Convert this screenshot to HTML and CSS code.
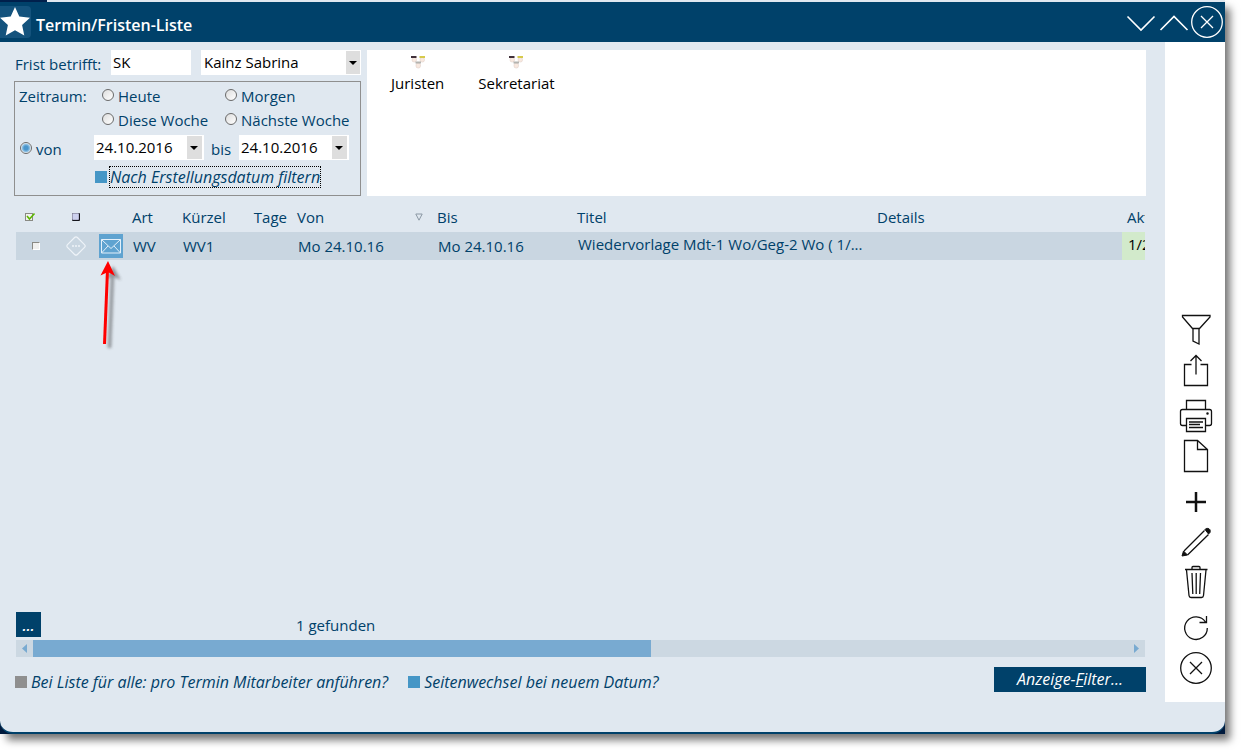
FILE: index.html
```html
<!DOCTYPE html>
<html lang="de">
<head>
<meta charset="utf-8">
<title>Termin/Fristen-Liste</title>
<link rel="stylesheet" href="styles.css">
</head>
<body>
<div class="frame">
  <div class="strip"></div>
  <div class="window">
    <header class="titlebar">
      <svg class="star" viewBox="0 0 31 32"><rect x="-4" width="35" height="32" rx="4" fill="#14537d"/><path d="M15 1l4.300 9.600 10.700 1.200-7.900 7.200 2.200 10.400-9.300-5.200-9.300 5.200 2.200-10.400L0 11.800l10.700-1.200z" fill="#fff"/></svg>
      <h1>Termin/Fristen-Liste</h1>
      <button class="winbtn" aria-label="Nach unten"><svg viewBox="0 0 32 34"><path d="M2.500 11.500L16 25 29.500 11.500"/></svg></button>
      <button class="winbtn" aria-label="Nach oben"><svg viewBox="0 0 32 34"><path d="M2.500 25L16 11.500 29.500 25"/></svg></button>
      <button class="winbtn" aria-label="Schließen"><svg viewBox="0 0 32 34"><g stroke-width="1.300"><circle cx="16" cy="17" r="15.300"/><path d="M10 11l12 12M22 11L10 23"/></g></svg></button>
    </header>

    <div class="body">
      <main class="main">
        <section class="top">
          <form class="filters">
            <div class="person">
              <label for="kz">Frist betrifft:</label>
              <input class="field code" id="kz" type="text" value="SK">
              <span class="combo name"><select class="field" aria-label="Mitarbeiter"><option>Kainz Sabrina</option></select></span>
            </div>
            <div class="period">
              <span class="caption">Zeitraum:</span>
              <label class="radio c2"><input type="radio" name="z">Heute</label>
              <label class="radio c3"><input type="radio" name="z">Morgen</label>
              <label class="radio c2"><input type="radio" name="z">Diese Woche</label>
              <label class="radio c3"><input type="radio" name="z">Nächste Woche</label>
              <div class="range">
                <label class="radio"><input type="radio" name="z" checked>von</label>
                <span class="combo date"><select class="field" aria-label="Datum von"><option>24.10.2016</option></select></span>
                <span class="until">bis</span>
                <span class="combo date"><select class="field" aria-label="Datum bis"><option>24.10.2016</option></select></span>
              </div>
              <label class="check created"><input type="checkbox" checked><span class="focus">Nach Erstellungsdatum filtern</span></label>
            </div>
          </form>
          <div class="groups">
            <a href="#" class="group"><svg class="people" viewBox="0 0 16 14"><g fill="#f8e9e0" stroke="#dccbc2" stroke-width=".5"><rect x="2" y="2.500" width="4.500" height="4.500" rx="2"/><rect x="10" y="2.500" width="4.500" height="4.500" rx="2"/><rect x="6" y="8" width="4.500" height="5" rx="2"/></g><path d="M1 1h5.500v2h-5.500z" fill="#40303a"/><path d="M9.500 1h5.500v2h-5.500z" fill="#d6ca4c"/><path d="M5.500 6.500h5.500v2h-5.500z" fill="#b4b4b0"/></svg>Juristen</a>
            <a href="#" class="group"><svg class="people" viewBox="0 0 16 14"><g fill="#f8e9e0" stroke="#dccbc2" stroke-width=".5"><rect x="2" y="2.500" width="4.500" height="4.500" rx="2"/><rect x="10" y="2.500" width="4.500" height="4.500" rx="2"/><rect x="6" y="8" width="4.500" height="5" rx="2"/></g><path d="M1 1h5.500v2h-5.500z" fill="#40303a"/><path d="M9.500 1h5.500v2h-5.500z" fill="#d6ca4c"/><path d="M5.500 6.500h5.500v2h-5.500z" fill="#b4b4b0"/></svg>Sekretariat</a>
          </div>
        </section>

        <section class="list">
          <table>
            <colgroup><col class="w-check"><col class="w-state"><col class="w-mail"><col class="w-art"><col class="w-code"><col class="w-days"><col class="w-date"><col class="w-date"><col class="w-title"><col class="w-details"><col class="w-file"></colgroup>
            <thead>
              <tr>
                <th class="pick"><svg class="mini" viewBox="0 0 12 12"><rect x="1.500" y="2.500" width="7" height="7" fill="#f2f2ee" stroke="#8a8a84"/><path d="M3 5l2.500 3L10.500 2.500" fill="none" stroke="#5cb800" stroke-width="1.600"/></svg></th>
                <th class="mid"><svg class="mini" viewBox="0 0 12 12"><rect x="2" y="2" width="8" height="8" rx="1" fill="#15151c"/><rect x="2" y="2" width="7" height="7" rx="1" fill="#9a9ab4"/><rect x="3" y="3" width="5.500" height="5.500" fill="#ccd0ee"/></svg></th>
                <th></th><th>Art</th><th>Kürzel</th><th class="num">Tage</th>
                <th><span class="sorted">Von<svg class="sort" viewBox="0 0 8 8"><path d="M.8 1h6.400L4 7.200z" fill="none" stroke="#8b98a4"/></svg></span></th>
                <th>Bis</th><th>Titel</th><th>Details</th><th>Akt</th>
              </tr>
            </thead>
            <tbody>
              <tr>
                <td class="pick"><input class="rowbox" type="checkbox" aria-label="Zeile auswählen"></td>
                <td class="mid"><svg class="state" viewBox="0 0 22 22"><rect x="4" y="4" width="14" height="14" rx="2" transform="rotate(45 11 11)" fill="none" stroke="#eef3f8" stroke-width="1.200"/><path d="M7 11h2m1 0h2m1 0h2" stroke="#eef3f8" stroke-width="1.500"/></svg></td>
                <td class="mailcell"><button class="mail" aria-label="Nachricht"><svg viewBox="0 0 24 24"><path d="M2.500 5.500h19v13.500h-19zM2.500 5.500l9.500 9 9.500-9M2.500 19l6.500-7M21.500 19L15 12" fill="none" stroke="#e4f0fa"/></svg></button></td>
                <td>WV</td><td>WV1</td><td></td><td>Mo 24.10.16</td><td>Mo 24.10.16</td>
                <td class="title">Wiedervorlage Mdt-1 Wo/Geg-2 Wo ( 1/...</td><td></td><td class="file">1/2</td>
              </tr>
            </tbody>
          </table>
          <svg class="pointer" viewBox="0 0 32 96"><defs><filter id="soft" x="-50%" y="-20%" width="200%" height="140%"><feGaussianBlur stdDeviation="1.800"/></filter></defs><g transform="translate(5 5)" opacity=".45" filter="url(#soft)"><path d="M10.500 85L13.500 12" stroke="#333" stroke-width="3.500"/><path d="M14 3l8 14-8-3.500-7 2.500z" fill="#333"/></g><path d="M10.500 86L13.500 12" stroke="#f00" stroke-width="3"/><path d="M14 3l7 15-7-4-7.500 3.500z" fill="#f00"/></svg>
        </section>

        <div class="status"><button class="more">...</button><span>1 gefunden</span></div>
        <div class="scroll">
          <button class="arrow" aria-label="Nach links"><svg viewBox="0 0 17 17"><path d="M11 4v9L6 8.500z"/></svg></button>
          <div class="track"><div class="thumb"></div></div>
          <button class="arrow" aria-label="Nach rechts"><svg viewBox="0 0 17 17"><path d="M6 4v9l5-4.500z"/></svg></button>
        </div>
        <div class="options">
          <label class="check"><input type="checkbox">Bei Liste für alle: pro Termin Mitarbeiter anführen?</label>
          <label class="check"><input type="checkbox" checked>Seitenwechsel bei neuem Datum?</label>
          <button class="display">Anzeige-<u>F</u>ilter...</button>
        </div>
      </main>

      <aside class="tools">
        <div class="set">
          <button aria-label="Filter"><svg viewBox="0 0 40 40"><path d="M7.500 2.500h27.500v1.500L24.500 15.500h-7L7.500 4zM18 15.500V28l6 3V15.500"/></svg></button>
          <button aria-label="Exportieren"><svg viewBox="0 0 40 40"><path d="M16.500 11.500h-7v21h23v-21h-7M21 21.500V2.500M15.500 8L21 2.500 26.500 8"/></svg></button>
        </div>
        <div class="set">
          <button aria-label="Drucken"><svg viewBox="0 0 40 40"><path d="M11.500 11.500v-9h19v9M11.500 27.500h-4a2 2 0 0 1-2-2v-12a2 2 0 0 1 2-2h27a2 2 0 0 1 2 2v12a2 2 0 0 1-2 2h-4M11.500 20.500h19v13h-19zM14 24h14M14 26.500h11M14 29.500h14"/><circle cx="32.500" cy="15.500" r=".6" fill="#111"/></svg></button>
          <button aria-label="Neues Dokument"><svg viewBox="0 0 40 40"><path d="M9.500 2.500h13l10 9v22h-23zM22.500 2.500v9h10"/></svg></button>
        </div>
        <div class="set">
          <button aria-label="Hinzufügen"><svg viewBox="0 0 40 40"><path d="M21 9v20M11 19h20" stroke-width="2.500"/></svg></button>
          <button aria-label="Bearbeiten"><svg viewBox="0 0 40 40"><path d="M9 28L29.500 7.500M12.500 32L33.500 11.500" stroke-width="1.300"/><path d="M7 33l1.500-5 4 4zM30 6.500c1-2 6.500-1.500 5 3l-1.500 1.500z" fill="#111" stroke-width="1"/></svg></button>
          <button aria-label="Löschen"><svg viewBox="0 0 40 40"><path d="M10 6.500h22.500M17 6.500v-2q0-1 1-1h6q1 0 1 1v2M11.500 7l2.500 25.500q.2 2 2 2h10.500q1.800 0 2-2L31 7M17 10l.8 21M21.200 10v21M25.500 10l-.8 21"/></svg></button>
        </div>
        <div class="set">
          <button aria-label="Aktualisieren"><svg viewBox="0 0 40 40"><path d="M32.300 20A11.300 11.300 0 1 1 30.500 14M31.500 8v6.500h-7"/></svg></button>
          <button aria-label="Schließen"><svg viewBox="0 0 40 40"><circle cx="21" cy="20" r="15.300"/><path d="M15 14l12 12M27 14L15 26"/></svg></button>
        </div>
      </aside>
    </div>
    <div class="foot"></div>
  </div>
</div>
</body>
</html>
```

FILE: styles.css
```css
* { box-sizing: border-box; }

body {
  margin: 0;
  background: #fff;
  color: #00416a;
  font: 15px/20px "Open Sans", "Noto Sans", sans-serif;
}

button, input, select { font: inherit; margin: 0; }
button { border: 0; padding: 0; background: none; }
svg { display: block; }

.frame {
  display: flex;
  flex-direction: column;
  min-height: calc(100vh - 16px);
  margin: 0 16px 16px 0;
  background: #001a3d;
  box-shadow: 6px 7px 8px -1px rgba(0, 0, 0, .55);
}

.strip {
  height: 2px;
  background: linear-gradient(90deg, #00204c 47px, #e0e8f0 47px);
}

.window {
  flex: 1;
  display: flex;
  flex-direction: column;
  overflow: hidden;
  background: #e0e8f0;
  border-bottom: 2px solid #00416a;
  border-radius: 0 0 13px 13px;
}

.titlebar {
  display: flex;
  align-items: center;
  height: 40px;
  padding-right: 1px;
  background: #00416a;
  color: #fff;
}
.star { width: 31px; height: 32px; }
.titlebar h1 {
  flex: 1;
  margin: 6px 0 0 5px;
  font-size: 16px;
  line-height: 20px;
  font-weight: 600;
}
.winbtn { width: 33px; }
.winbtn svg {
  width: 32px;
  height: 34px;
  fill: none;
  stroke: #fff;
  stroke-width: 1.6;
}

.body { flex: 1; display: flex; }
.main {
  flex: 1;
  min-width: 0;
  display: flex;
  flex-direction: column;
  padding: 8px 19px 0 14px;
}

.top { display: flex; gap: 6px; }
.filters { width: 347px; }
.person { display: flex; height: 25px; margin-bottom: 6px; }
.person label { width: 97px; padding: 4px 0 0 1px; }

.field {
  width: 100%;
  height: 25px;
  padding: 0 2px 2px;
  border: 0;
  border-radius: 0;
  background: #fff;
  color: #000;
  appearance: none;
}
.code { width: 80px; margin-right: 10px; }
.combo { position: relative; }
.combo::before {
  content: "";
  position: absolute;
  top: 1px;
  right: 1px;
  width: 14px;
  height: 23px;
  background: #dedede;
  pointer-events: none;
}
.combo::after {
  content: "";
  position: absolute;
  top: 11px;
  right: 4px;
  border: 4px solid transparent;
  border-top-color: #000;
  border-bottom: 0;
  pointer-events: none;
}
.name { flex: 1; }
.name .field { padding-left: 3px; }
.date { width: 110px; }
.date::before { right: 2px; width: 15px; }
.date::after { right: 6px; }

.period {
  display: grid;
  grid-template-columns: 83px 123px 1fr;
  grid-template-rows: 24px 24px 34px 1fr;
  height: 115px;
  padding: 2px 0 0 4px;
  border: 1px solid #8f8f8f;
}
.caption { padding-top: 2px; }
.radio { display: flex; padding-top: 2px; }
.c2 { grid-column: 2; }
.c3 { grid-column: 3; }
.radio input {
  appearance: none;
  width: 12px;
  height: 12px;
  margin: 3px 4px 0 0;
  border: 1px solid #6a6a6a;
  border-radius: 50%;
  background: linear-gradient(135deg, #ddd, #fff);
}
.radio input:checked {
  background: radial-gradient(circle, #4a96cc 0 2px, #9cc8e6 4px, #fff 5px);
}
.range { grid-column: 1 / -1; display: flex; padding-top: 3px; }
.range .radio { width: 75px; padding: 4px 0 0 1px; }
.until { width: 35px; padding: 4px 0 0 7px; }

.check {
  display: flex;
  align-items: center;
  gap: 4px;
  font-size: 16px;
  font-style: italic;
}
.check input {
  appearance: none;
  width: 12px;
  height: 12px;
  background: #8f8f8f;
}
.check input:checked { background: #4596c6; }
.created { grid-column: 1 / -1; align-self: start; gap: 2px; padding-left: 76px; }
.focus { border: 1px dotted #000; }

.groups {
  flex: 1;
  display: flex;
  align-items: flex-start;
  gap: 34px;
  padding: 5px 24px;
  background: #fff;
}
.group {
  display: flex;
  flex-direction: column;
  align-items: center;
  gap: 4px;
  color: #000;
  text-decoration: none;
}
.people { width: 16px; height: 14px; }

.list {
  position: relative;
  flex: 1;
  overflow: hidden;
  margin: 6px 1px 0 2px;
}
table { width: 1206px; table-layout: fixed; border-collapse: collapse; white-space: nowrap; }
.w-check { width: 40px; }
.w-state { width: 40px; }
.w-mail { width: 31px; }
.w-art { width: 50px; }
.w-code { width: 70px; }
.w-days { width: 45px; }
.w-date { width: 140px; }
.w-title { width: 300px; }
.w-details { width: 250px; }
.w-file { width: 100px; }
th { height: 30px; padding: 0 5px; font-weight: 400; text-align: left; }
td { height: 28px; padding: 0 6px; background: #c9d6e1; }
.num { text-align: right; }
th.pick { padding-left: 8px; }
td.pick { padding-left: 16px; }
th.mid, td.mid { padding: 0; }
.mid svg { margin: 0 auto; }
.mini { width: 12px; height: 12px; }
.state { width: 22px; height: 22px; }
.rowbox {
  display: block;
  appearance: none;
  width: 8px;
  height: 8px;
  border: 1px solid #8a8a84;
  border-right-color: #fff;
  border-bottom-color: #fff;
  background: #f0f0ee;
}
.mailcell { padding: 0 3px; }
.mail { display: block; width: 24px; height: 24px; background: #5fa3d0; }
.sorted { display: flex; align-items: center; justify-content: space-between; padding-right: 4px; }
.sort { width: 8px; height: 8px; }
td.title { padding-bottom: 4px; }
td.file { padding-bottom: 4px; background: #d2eacb; color: #000; }
.pointer { position: absolute; top: 56px; left: 78px; width: 32px; height: 96px; }

.status { display: flex; align-items: center; height: 25px; margin: 0 0 3px 2px; }
.status span { margin-left: 255px; }
.more { width: 25px; height: 25px; background: #00416a; color: #fff; font-style: italic; font-weight: 600; }

.scroll { display: flex; height: 17px; margin: 0 1px 0 2px; background: #ccd8e2; }
.arrow { width: 17px; fill: #78aad1; }
.track { flex: 1; }
.thumb { width: 56.4%; height: 100%; background: #78aad1; }

.options { display: flex; align-items: center; gap: 20px; height: 25px; margin: 10px 0 10px 1px; }
.options .check { padding-top: 4px; }
.display {
  width: 152px;
  height: 25px;
  padding-bottom: 2px;
  margin-left: auto;
  background: #00416a;
  color: #fff;
  font-size: 16px;
  font-style: italic;
}

.tools {
  display: flex;
  flex-direction: column;
  align-items: center;
  justify-content: flex-end;
  gap: 5px;
  width: 60px;
  padding-bottom: 14px;
  background: #fff;
}
.set { display: flex; flex-direction: column; }
.set button, .set svg { width: 40px; height: 40px; }
.set svg { fill: none; stroke: #111; stroke-width: 1.3; }
.foot { height: 30px; }
```
